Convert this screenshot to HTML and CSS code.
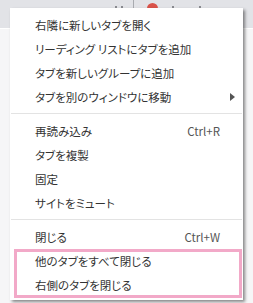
FILE: index.html
```html
<!DOCTYPE html>
<html lang="ja">
<head>
    <meta charset="UTF-8">
    <meta name="viewport" content="width=device-width, initial-scale=1.0">
    <title>タブのメニュー</title>
    <link rel="stylesheet" href="styles.css">
</head>
<body>

<div class="tabstrip">
  <span class="mark mark-a"></span>
  <span class="mark mark-b"></span>
  <span class="divider"></span>
  <span class="favicon"></span>
  <span class="mark mark-c"></span>
  <span class="mark mark-d"></span>
</div>
<div class="toolbar"></div>

<div class="menu">
  <div class="item">右隣に新しいタブを開く</div>
  <div class="item">リーディング リストにタブを追加</div>
  <div class="item">タブを新しいグループに追加</div>
  <div class="item">タブを別のウィンドウに移動
    <svg class="arrow" width="5" height="8" viewBox="0 0 5 8"><path d="M0 0 L5 4 L0 8 Z" fill="#555"/></svg>
  </div>
  <div class="sep"></div>
  <div class="item">再読み込み<span class="key">Ctrl+R</span></div>
  <div class="item">タブを複製</div>
  <div class="item">固定</div>
  <div class="item">サイトをミュート</div>
  <div class="sep"></div>
  <div class="item">閉じる<span class="key">Ctrl+W</span></div>
  <div class="item">他のタブをすべて閉じる</div>
  <div class="item">右側のタブを閉じる</div>
  <div class="highlight"></div>
</div>

</body>
</html>
```

FILE: styles.css
```css
body {
    margin: 0;
    background-color: #f6f6f7;
    font-family: "Noto Sans CJK JP", sans-serif;
    height: 303px;
    overflow: hidden;
    position: relative;
}
.tabstrip {
    height: 28px;
    background: #e2e3e7;
    position: relative;
}
.toolbar {
    height: 1px;
    background: #ffffff;
}
.mark {
    position: absolute;
    top: 6px;
    width: 2px;
    height: 2px;
    background: #8a8b90;
}
.mark-a { left: 115px; }
.mark-b { left: 121px; }
.mark-c { left: 172px; }
.mark-d { left: 199px; }
.divider {
    position: absolute;
    left: 133px;
    top: 0;
    width: 1px;
    height: 8px;
    background: #a9abb0;
}
.favicon {
    position: absolute;
    left: 147px;
    top: 3px;
    width: 11px;
    height: 11px;
    border-radius: 50%;
    background: #d9534a;
}
.menu {
    position: absolute;
    left: 10px;
    top: 8px;
    width: 233px;
    padding: 5px 0 3px;
    background: #ffffff;
    box-shadow: 2px 2px 3px rgba(0, 0, 0, 0.45);
}
.item {
    height: 24px;
    display: flex;
    align-items: center;
    padding: 0 23px 0 25px;
    font-size: 11.5px;
    color: #333333;
    font-feature-settings: "palt";
}
.key {
    margin-left: auto;
    color: #555555;
}
.arrow {
    margin-left: auto;
    margin-right: -15px;
}
.sep {
    height: 1px;
    margin: 4px 1px 5px;
    background: #e3e3e3;
}
.highlight {
    position: absolute;
    left: 4px;
    top: 241px;
    width: 222px;
    height: 43px;
    border: 3px solid #f2a9c8;
}
```
